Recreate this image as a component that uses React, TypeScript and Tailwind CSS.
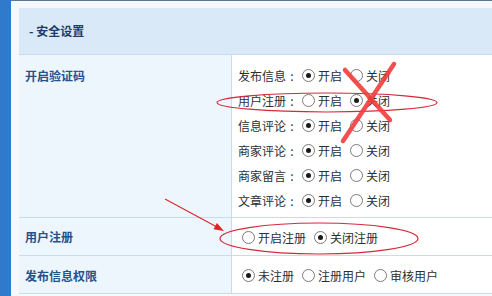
import React from 'react';

const font = { fontFamily: '"Noto Sans CJK SC", "Noto Sans", sans-serif' };

const Radio: React.FC<{ checked?: boolean }> = ({ checked }) => (
  <span className="ml-[4px] mr-[3px] flex h-[13px] w-[13px] shrink-0 items-center justify-center rounded-full border border-[#7a7a7a] bg-white">
    {checked && <span className="h-[5px] w-[5px] rounded-full bg-[#1a1a1a]" />}
  </span>
);

const Option: React.FC<{ label: string; checked?: boolean }> = ({ label, checked }) => (
  <span className="mr-[4px] flex items-center">
    <Radio checked={checked} />
    {label}
  </span>
);

const captchaRows = [
  { name: '发布信息', on: true },
  { name: '用户注册', on: false },
  { name: '信息评论', on: true },
  { name: '商家评论', on: true },
  { name: '商家留言', on: true },
  { name: '文章评论', on: true },
];

export default function App() {
  return (
    <div className="relative flex h-[296px] w-[492px] overflow-hidden bg-white text-[12px] text-[#2e2e2e]" style={font}>
      {/* left blue frame */}
      <div className="w-[11px] shrink-0 bg-[#2f7acb]" />

      <div className="flex-1 border-t border-[#5d7792] bg-[#f6f9fc] pl-[8px] pt-[7px]">
        <div className="flex h-[47px] items-center border-b border-[#c8dcee] bg-[#dae9f7] pl-[10px] font-bold text-[#1c3d6b]">
          - 安全设置
        </div>

        {/* 开启验证码 */}
        <div className="flex h-[163px] border-b border-[#c8dcee]">
          <div className="w-[213px] shrink-0 border-r border-[#c8dcee] bg-[#eef6fd] pl-[6px] pt-[8px] font-bold leading-[25px] text-[#22538f]">
            开启验证码
          </div>
          <div className="flex-1 bg-white pl-[6px] pt-[8px]">
            {captchaRows.map((r) => (
              <div key={r.name} className="flex h-[25px] items-center">
                {r.name}
                <span className="w-[12px] text-center">:</span>
                <Option label="开启" checked={r.on} />
                <Option label="关闭" checked={!r.on} />
              </div>
            ))}
          </div>
        </div>

        {/* 用户注册 */}
        <div className="flex h-[38px] border-b border-[#c8dcee]">
          <div className="flex w-[213px] shrink-0 items-center border-r border-[#c8dcee] bg-[#eef6fd] pl-[6px] font-bold text-[#22538f]">
            用户注册
          </div>
          <div className="flex flex-1 items-center bg-white pl-[6px] pt-[2px]">
            <Option label="开启注册" />
            <Option label="关闭注册" checked />
          </div>
        </div>

        {/* 发布信息权限 */}
        <div className="flex h-[38px] border-b border-[#c8dcee]">
          <div className="flex w-[213px] shrink-0 items-center border-r border-[#c8dcee] bg-[#eef6fd] pl-[6px] pt-[2px] font-bold text-[#22538f]">
            发布信息权限
          </div>
          <div className="flex flex-1 items-center bg-white pl-[6px] pt-[2px]">
            <Option label="未注册" checked />
            <Option label="注册用户" />
            <Option label="审核用户" />
          </div>
        </div>
      </div>

      {/* red annotations drawn on top */}
      <svg className="pointer-events-none absolute left-0 top-0" width="492" height="296" viewBox="0 0 492 296">
        <ellipse cx="327" cy="102.5" rx="110" ry="9.5" fill="none" stroke="#d42a3c" strokeWidth="1.2" />
        <ellipse cx="319" cy="238.5" rx="99" ry="15.5" fill="none" stroke="#d42a3c" strokeWidth="1.2" />
        <line x1="345" y1="70" x2="390" y2="120" stroke="#f23c3c" strokeOpacity="0.9" strokeWidth="4.5" strokeLinecap="round" />
        <line x1="394" y1="64" x2="343" y2="141" stroke="#f23c3c" strokeOpacity="0.9" strokeWidth="4.5" strokeLinecap="round" />
        <line x1="165" y1="199" x2="216" y2="226.6" stroke="#e02424" strokeWidth="1.1" />
        <polygon points="224,231 213.5,229.3 216.9,223.1" fill="#e02424" />
      </svg>
    </div>
  );
}
